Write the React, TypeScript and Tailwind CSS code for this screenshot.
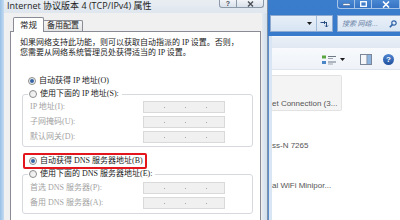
import React from "react";

function Radio({ checked }: { checked?: boolean }) {
  return (
    <span className="w-[8px] h-[8px] rounded-full border border-[#8c8c8c] bg-gradient-to-br from-[#e6e6e6] to-[#fbfbfb] flex items-center justify-center shrink-0">
      {checked && <span className="w-[4px] h-[4px] rounded-full bg-[#3565a6]" />}
    </span>
  );
}

function IpBox() {
  return (
    <div className="w-[82px] h-[12px] border border-[#d9d9d9] bg-[#f0f0f0] flex items-center">
      <span className="w-[20px]" />
      <span className="w-[1px] h-[1px] bg-[#a8a8a8]" />
      <span className="w-[20px]" />
      <span className="w-[1px] h-[1px] bg-[#a8a8a8]" />
      <span className="w-[20px]" />
      <span className="w-[1px] h-[1px] bg-[#a8a8a8]" />
    </div>
  );
}

function FieldRow({ label }: { label: string }) {
  return (
    <div className="h-[12px] flex items-center">
      <span className="w-[113px] text-[#a3a3a3] leading-[10px]">{label}</span>
      <IpBox />
    </div>
  );
}

function Dialog() {
  return (
    <div className="w-[268px] h-[220px] shrink-0 flex bg-[#dde6ef] border-r border-[#7d90a6]">
      <div className="w-[4px] h-full bg-gradient-to-r from-[#98c0e6] to-[#c6dcf1]" />
      <div className="flex-1 flex flex-col min-w-0">
        {/* title bar */}
        <div className="h-[13px] shrink-0 flex items-start bg-gradient-to-b from-[#e9eef3] to-[#dfe6ee]">
          <span className="pl-[3px] flex-1 text-[9px] leading-[11px] text-[#1e1e1e] font-['Open_Sans','Noto_Sans_CJK_SC',sans-serif] whitespace-nowrap">
            Internet 协议版本 4 (TCP/IPv4) 属性
          </span>
          <div className="w-[18px] h-[8px] border border-t-0 border-[#8b99a9] rounded-bl-[3px] bg-gradient-to-b from-[#f1f4f7] to-[#d9e1ea] flex items-center justify-center text-[7px] leading-[7px] font-bold text-[#4a4f57] font-['Liberation_Sans',sans-serif]">
            ?
          </div>
          <div className="w-[27px] h-[8px] border border-t-0 border-l-0 border-[#8b99a9] rounded-br-[3px] bg-gradient-to-b from-[#f1f4f7] to-[#d9e1ea] flex items-center justify-center">
            <svg width="7" height="6" viewBox="0 0 7 6">
              <path d="M1 0.5 L6 5.5 M6 0.5 L1 5.5" stroke="#4a4f57" strokeWidth="1.4" />
            </svg>
          </div>
          <div className="w-[3px]" />
        </div>
        {/* body */}
        <div className="flex-1 flex min-h-0">
          <div className="w-[258px] bg-[#f0f0f0] pl-[6px] pr-[1px] pt-[4px] flex flex-col font-['Liberation_Serif','Noto_Sans_CJK_SC',serif] text-[8px]">
            {/* tabs */}
            <div className="h-[14px] flex items-start pl-[3px] shrink-0">
              <div className="w-[31px] h-[15px] border border-b-0 border-[#898c95] rounded-t-[2px] bg-white relative z-10 flex items-center justify-center text-[#1e1e1e] leading-[10px] text-[8.5px]">
                常规
              </div>
              <div className="w-[40px] h-[11px] mt-[3px] -ml-[1px] border border-b-0 border-[#898c95] rounded-t-[2px] bg-gradient-to-b from-[#f6f6f6] to-[#e4e4e4] flex items-center justify-center text-[#1e1e1e] leading-[10px]">
                备用配置
              </div>
            </div>
            {/* panel */}
            <div className="flex-1 border border-b-0 border-[#898c95] bg-white pl-[9px] pt-[6px] flex flex-col text-[#1a1a1a]">
              <div className="leading-[10px] whitespace-nowrap">
                如果网络支持此功能，则可以获取自动指派的 IP 设置。否则，
              </div>
              <div className="leading-[10px] whitespace-nowrap">
                您需要从网络系统管理员处获得适当的 IP 设置。
              </div>
              <div className="mt-[18px] h-[10px] flex items-center pl-[8px]">
                <Radio checked />
                <span className="ml-[3px] leading-[10px]">自动获得 IP 地址(O)</span>
              </div>
              <fieldset className="mt-[3px] ml-[2px] w-[231px] border border-[#d6dadf] rounded-[3px] pb-[3px]">
                <legend className="ml-[5px] px-[1px] h-[10px] flex items-center">
                  <Radio />
                  <span className="ml-[3px] leading-[10px] pr-[2px]">使用下面的 IP 地址(S):</span>
                </legend>
                <div className="pl-[7px] pt-[2px] flex flex-col gap-[3px]">
                  <FieldRow label="IP 地址(I):" />
                  <FieldRow label="子网掩码(U):" />
                  <FieldRow label="默认网关(D):" />
                </div>
              </fieldset>
              <div className="mt-[6px] ml-[3px] w-[124px] h-[16px] border-2 border-[#e3161e] rounded-[2px] flex items-center pl-[4px]">
                <Radio checked />
                <span className="ml-[3px] leading-[10px] whitespace-nowrap">自动获得 DNS 服务器地址(B)</span>
              </div>
              <fieldset className="ml-[2px] w-[231px] border border-[#d6dadf] rounded-[3px] pb-[4px]">
                <legend className="ml-[5px] px-[1px] h-[10px] flex items-center">
                  <Radio />
                  <span className="ml-[3px] leading-[10px] pr-[2px] whitespace-nowrap">使用下面的 DNS 服务器地址(E):</span>
                </legend>
                <div className="pl-[7px] pt-[3px] flex flex-col gap-[3px]">
                  <FieldRow label="首选 DNS 服务器(P):" />
                  <FieldRow label="备用 DNS 服务器(A):" />
                </div>
              </fieldset>
            </div>
          </div>
          <div className="flex-1 bg-gradient-to-r from-[#e3eaf1] to-[#d2dfec]" />
        </div>
      </div>
    </div>
  );
}

function CapBtn({ w, children, last }: { w: string; children: React.ReactNode; last?: boolean }) {
  return (
    <div
      className={`${w} h-[9px] border border-t-0 ${last ? "" : "border-r-0"} border-[#a6c3e8] bg-gradient-to-b from-[#4b88d2] to-[#3573c4] flex items-center justify-center`}
    >
      {children}
    </div>
  );
}

function Explorer() {
  return (
    <div className="flex-1 h-full flex flex-col bg-gradient-to-b from-[#3a7dcd] to-[#2d6cbf] min-w-0 overflow-hidden">
      {/* title bar */}
      <div className="h-[14px] shrink-0 flex justify-end items-start">
        <div className="w-[17px] h-[9px] border border-t-0 border-r-0 border-[#a6c3e8] rounded-bl-[3px] bg-gradient-to-b from-[#4b88d2] to-[#3573c4] flex items-center justify-center">
          <svg width="7" height="3" viewBox="0 0 7 3">
            <rect x="0" y="0.5" width="7" height="2" fill="#ffffff" stroke="#1d3f6e" strokeWidth="0.4" />
          </svg>
        </div>
        <CapBtn w="w-[17px]">
          <svg width="7" height="6" viewBox="0 0 7 6">
            <rect x="0.7" y="0.7" width="5.6" height="4.6" fill="none" stroke="#ffffff" strokeWidth="1.3" />
          </svg>
        </CapBtn>
        <CapBtn w="w-[29px]" last>
          <svg width="8" height="7" viewBox="0 0 8 7">
            <path d="M1 0.5 L7 6.5 M7 0.5 L1 6.5" stroke="#ffffff" strokeWidth="1.6" />
          </svg>
        </CapBtn>
      </div>
      {/* address row */}
      <div className="h-[22px] shrink-0 flex items-start pt-[1px] pl-[2px]">
        <div className="w-[63px] h-[17px] border border-[#8eaad0] bg-gradient-to-b from-[#e7eff8] to-[#d7e4f3] flex items-stretch">
          <div className="flex-1 flex items-center justify-end pr-[4px]">
            <svg width="5" height="3" viewBox="0 0 5 3">
              <path d="M0 0 H5 L2.5 3 Z" fill="#1b1b1b" />
            </svg>
          </div>
          <div className="w-[16px] border-l border-[#a4bbd9] flex items-center justify-center">
            <svg width="9" height="8" viewBox="0 0 9 8">
              <path d="M0.5 2.5 H5.5 M4 1 L5.5 2.5 L4 4" stroke="#284d80" strokeWidth="1" fill="none" />
              <path d="M6.5 2 V7 M5 5.5 L6.5 7 L8 5.5" stroke="#284d80" strokeWidth="1" fill="none" />
            </svg>
          </div>
        </div>
        <div className="ml-[4px] flex-1 h-[17px] border border-r-0 border-[#8eaad0] bg-gradient-to-b from-[#e9f0f8] to-[#dae6f4] flex items-center pl-[4px]">
          <span className="flex-1 italic text-[7px] leading-[9px] text-[#6b84a6] font-['Noto_Sans_CJK_SC',sans-serif] whitespace-nowrap">
            搜索 网络...
          </span>
          <svg width="8" height="8" viewBox="0 0 8 8" className="mr-[3px]">
            <circle cx="5" cy="3" r="2.2" fill="none" stroke="#2f63a8" strokeWidth="1.2" />
            <path d="M3.4 4.6 L0.8 7.2" stroke="#2f63a8" strokeWidth="1.6" />
          </svg>
        </div>
      </div>
      {/* content area with frame */}
      <div className="flex-1 flex flex-col border-l border-[#5c8fcc] pl-[3px] bg-[#d8e5f3] min-h-0">
        <div className="flex-1 flex flex-col bg-white min-h-0">
          <div className="h-[12px] shrink-0 border-t border-[#f6f9fc] bg-gradient-to-b from-[#eaf0f7] to-[#e1e8f2]" />
          <div className="h-[22px] shrink-0 bg-gradient-to-b from-[#f8fafc] to-[#eef2f8] border-b border-[#dfe5ec] flex items-center justify-end pr-[6px] pt-[2px]">
            <svg width="14" height="10" viewBox="0 0 14 10">
              <rect x="0" y="0.5" width="4" height="3" fill="#5aa642" />
              <rect x="0" y="6" width="4" height="3" fill="#4a86c8" />
              <rect x="6" y="1" width="8" height="1" fill="#6d7683" />
              <rect x="6" y="3" width="5" height="1" fill="#9aa3ae" />
              <rect x="6" y="6.5" width="8" height="1" fill="#6d7683" />
              <rect x="6" y="8.5" width="5" height="1" fill="#9aa3ae" />
            </svg>
            <svg width="5" height="3" viewBox="0 0 5 3" className="ml-[4px]">
              <path d="M0 0 H5 L2.5 3 Z" fill="#1b1b1b" />
            </svg>
            <svg width="12" height="11" viewBox="0 0 12 11" className="ml-[15px]">
              <rect x="0.5" y="0.5" width="11" height="10" fill="#f4f6f9" stroke="#7b8698" />
              <rect x="7" y="1" width="4" height="9" fill="#8db3df" />
              <rect x="6.5" y="1" width="0.8" height="9" fill="#7b8698" />
            </svg>
            <div className="ml-[11px] w-[11px] h-[11px] rounded-full bg-gradient-to-b from-[#4f86d3] to-[#1f4f9c] flex items-center justify-center text-white text-[8px] leading-[8px] font-bold font-['Liberation_Sans',sans-serif]">
              ?
            </div>
          </div>
          <div className="flex-1 flex flex-col pt-[5px] text-[8px] text-[#555555] font-['Liberation_Sans',sans-serif] whitespace-nowrap">
            <div className="w-[70px] h-[36px] shrink-0 border border-l-0 border-[#e2e2e2] rounded-r-[2px] bg-[#f4f4f4] flex items-end pb-[1px]">
              <span className="leading-[10px]">et Connection (3...</span>
            </div>
            <div className="h-[40px] shrink-0 flex items-end">
              <span className="leading-[10px]">ss-N 7265</span>
            </div>
            <div className="h-[40px] shrink-0 flex items-end">
              <span className="leading-[10px]">al WiFi Minipor...</span>
            </div>
          </div>
        </div>
      </div>
    </div>
  );
}

export default function App() {
  return (
    <div className="w-[400px] h-[220px] flex overflow-hidden bg-white">
      <Dialog />
      <Explorer />
    </div>
  );
}
